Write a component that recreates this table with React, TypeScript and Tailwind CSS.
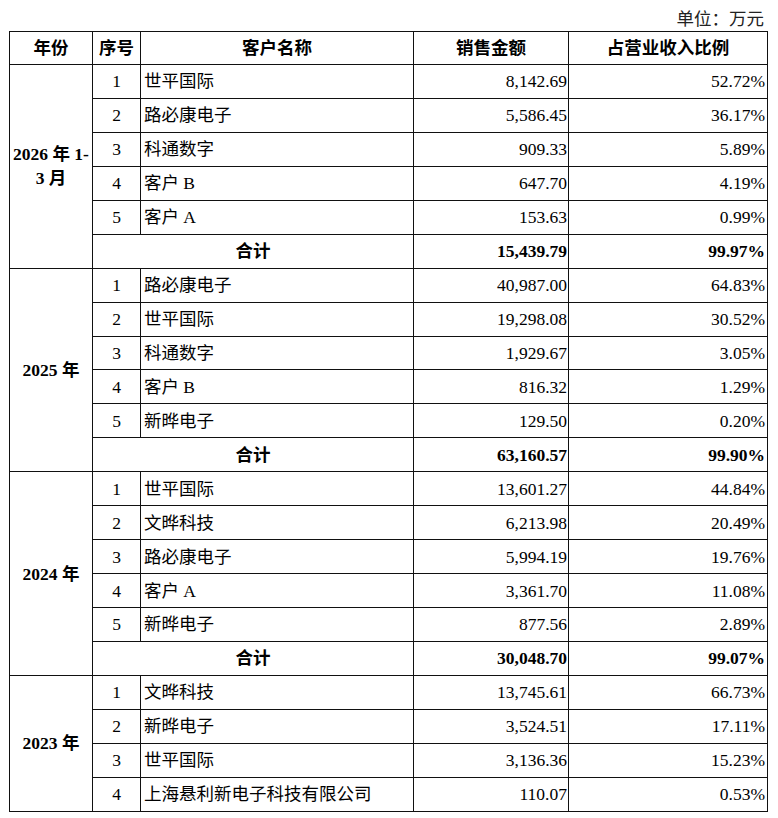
import React from "react";

type Row = { no: number; name: string; amount: string; ratio: string };
type Group = { year: React.ReactNode; rows: Row[]; total?: { amount: string; ratio: string } };

const groups: Group[] = [
  {
    year: (
      <>
        2026 年 1-
        <br />3 月
      </>
    ),
    rows: [
      { no: 1, name: "世平国际", amount: "8,142.69", ratio: "52.72%" },
      { no: 2, name: "路必康电子", amount: "5,586.45", ratio: "36.17%" },
      { no: 3, name: "科通数字", amount: "909.33", ratio: "5.89%" },
      { no: 4, name: "客户 B", amount: "647.70", ratio: "4.19%" },
      { no: 5, name: "客户 A", amount: "153.63", ratio: "0.99%" },
    ],
    total: { amount: "15,439.79", ratio: "99.97%" },
  },
  {
    year: "2025 年",
    rows: [
      { no: 1, name: "路必康电子", amount: "40,987.00", ratio: "64.83%" },
      { no: 2, name: "世平国际", amount: "19,298.08", ratio: "30.52%" },
      { no: 3, name: "科通数字", amount: "1,929.67", ratio: "3.05%" },
      { no: 4, name: "客户 B", amount: "816.32", ratio: "1.29%" },
      { no: 5, name: "新晔电子", amount: "129.50", ratio: "0.20%" },
    ],
    total: { amount: "63,160.57", ratio: "99.90%" },
  },
  {
    year: "2024 年",
    rows: [
      { no: 1, name: "世平国际", amount: "13,601.27", ratio: "44.84%" },
      { no: 2, name: "文晔科技", amount: "6,213.98", ratio: "20.49%" },
      { no: 3, name: "路必康电子", amount: "5,994.19", ratio: "19.76%" },
      { no: 4, name: "客户 A", amount: "3,361.70", ratio: "11.08%" },
      { no: 5, name: "新晔电子", amount: "877.56", ratio: "2.89%" },
    ],
    total: { amount: "30,048.70", ratio: "99.07%" },
  },
  {
    year: "2023 年",
    rows: [
      { no: 1, name: "文晔科技", amount: "13,745.61", ratio: "66.73%" },
      { no: 2, name: "新晔电子", amount: "3,524.51", ratio: "17.11%" },
      { no: 3, name: "世平国际", amount: "3,136.36", ratio: "15.23%" },
      { no: 4, name: "上海悬利新电子科技有限公司", amount: "110.07", ratio: "0.53%" },
    ],
  },
];

const cell = "border border-[#111] p-0 leading-[24px]";

export default function App() {
  return (
    <div
      className="min-h-screen bg-white pt-[8px] text-[17.5px] text-black"
      style={{ fontFamily: "'Liberation Serif', 'Noto Sans CJK SC', serif" }}
    >
      <div className="ml-[9px] w-[758px]">
        <div className="h-[23px] pr-[3px] text-right leading-[23px] text-[#222]">单位：万元</div>
        <table className="w-full table-fixed border-collapse">
          <colgroup>
            <col className="w-[83px]" />
            <col className="w-[48px]" />
            <col className="w-[273px]" />
            <col className="w-[155px]" />
            <col className="w-[199px]" />
          </colgroup>
          <thead>
            <tr className="h-[33px] font-bold">
              <th className={cell}>年份</th>
              <th className={cell}>序号</th>
              <th className={cell}>客户名称</th>
              <th className={cell}>销售金额</th>
              <th className={cell}>占营业收入比例</th>
            </tr>
          </thead>
          <tbody>
            {groups.map((g, gi) => (
              <React.Fragment key={gi}>
                {g.rows.map((r, ri) => (
                  <tr key={ri} className="h-[33.95px]">
                    {ri === 0 && (
                      <td
                        rowSpan={g.rows.length + (g.total ? 1 : 0)}
                        className={`${cell} text-center font-bold`}
                      >
                        {g.year}
                      </td>
                    )}
                    <td className={`${cell} text-center`}>{r.no}</td>
                    <td className={`${cell} pl-[3px] text-left`}>{r.name}</td>
                    <td className={`${cell} pr-[1px] text-right`}>{r.amount}</td>
                    <td className={`${cell} pr-[2px] text-right`}>{r.ratio}</td>
                  </tr>
                ))}
                {g.total && (
                  <tr className="h-[33.95px] font-bold">
                    <td colSpan={2} className={`${cell} text-center`}>
                      合计
                    </td>
                    <td className={`${cell} pr-[1px] text-right`}>{g.total.amount}</td>
                    <td className={`${cell} pr-[2px] text-right`}>{g.total.ratio}</td>
                  </tr>
                )}
              </React.Fragment>
            ))}
          </tbody>
        </table>
      </div>
    </div>
  );
}
